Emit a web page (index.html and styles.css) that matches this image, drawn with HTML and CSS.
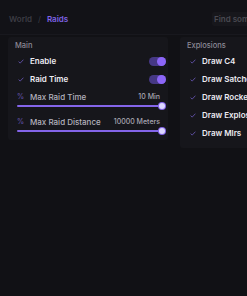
FILE: index.html
```html
<!DOCTYPE html>
<html>
<head>
<meta charset="utf-8">
<link rel="stylesheet" href="styles.css">
</head>
<body>
<header class="topbar">
  <nav class="crumbs">
    <span class="crumb">World</span>
    <span class="sep">/</span>
    <span class="crumb active">Raids</span>
  </nav>
  <div class="search">Find something...</div>
</header>
<main class="content">
  <section class="card card-main">
    <h2 class="card-title">Main</h2>
    <div class="row">
      <span class="ico"><svg width="6" height="5" viewBox="0 0 6 5"><path d="M0.6 2.6 L2.2 4.1 L5.4 0.7" fill="none" stroke="#5b4c9c" stroke-width="1"/></svg></span>
      <span class="label">Enable</span>
      <span class="toggle"><span class="knob"></span></span>
    </div>
    <div class="row">
      <span class="ico"><svg width="6" height="5" viewBox="0 0 6 5"><path d="M0.6 2.6 L2.2 4.1 L5.4 0.7" fill="none" stroke="#5b4c9c" stroke-width="1"/></svg></span>
      <span class="label">Raid Time</span>
      <span class="toggle"><span class="knob"></span></span>
    </div>
    <div class="slider-row">
      <div class="row slim">
        <span class="ico pct">%</span>
        <span class="label light">Max Raid Time</span>
        <span class="value">10 Min</span>
      </div>
      <div class="track"><span class="thumb"></span></div>
    </div>
    <div class="slider-row">
      <div class="row slim">
        <span class="ico pct">%</span>
        <span class="label light">Max Raid Distance</span>
        <span class="value">10000 Meters</span>
      </div>
      <div class="track"><span class="thumb"></span></div>
    </div>
  </section>
  <section class="card card-side">
    <h2 class="card-title">Explosions</h2>
    <div class="row"><span class="ico"><svg width="6" height="5" viewBox="0 0 6 5"><path d="M0.6 2.6 L2.2 4.1 L5.4 0.7" fill="none" stroke="#5b4c9c" stroke-width="1"/></svg></span><span class="label">Draw C4</span></div>
    <div class="row"><span class="ico"><svg width="6" height="5" viewBox="0 0 6 5"><path d="M0.6 2.6 L2.2 4.1 L5.4 0.7" fill="none" stroke="#5b4c9c" stroke-width="1"/></svg></span><span class="label">Draw Satchel</span></div>
    <div class="row"><span class="ico"><svg width="6" height="5" viewBox="0 0 6 5"><path d="M0.6 2.6 L2.2 4.1 L5.4 0.7" fill="none" stroke="#5b4c9c" stroke-width="1"/></svg></span><span class="label">Draw Rocket</span></div>
    <div class="row"><span class="ico"><svg width="6" height="5" viewBox="0 0 6 5"><path d="M0.6 2.6 L2.2 4.1 L5.4 0.7" fill="none" stroke="#5b4c9c" stroke-width="1"/></svg></span><span class="label">Draw Explosives</span></div>
    <div class="row"><span class="ico"><svg width="6" height="5" viewBox="0 0 6 5"><path d="M0.6 2.6 L2.2 4.1 L5.4 0.7" fill="none" stroke="#5b4c9c" stroke-width="1"/></svg></span><span class="label">Draw Mlrs</span></div>
  </section>
</main>
</body>
</html>
```
FILE: styles.css
```css
* { box-sizing: border-box; margin: 0; padding: 0; }
html, body { width: 247px; height: 296px; overflow: hidden; }
body {
  background: #111115;
  font-family: Inter, "Noto Sans", sans-serif;
  color: #e6e4ee;
}
.topbar {
  height: 35px;
  display: flex;
  align-items: center;
  justify-content: space-between;
  padding: 4px 0 0 9px;
  background: #121217;
  border-bottom: 1px solid #18181e;
  white-space: nowrap;
}
.crumbs { display: flex; gap: 6px; font-size: 8px; font-weight: 600; }
.crumb { color: #3c3c44; }
.sep { color: #3c3c44; font-weight: 400; }
.crumb.active { color: #7e63e6; }
.search {
  width: 35px;
  height: 14px;
  background: #17171c;
  border-radius: 2px 0 0 2px;
  font-size: 8px;
  font-weight: 600;
  color: #4a4a52;
  padding-left: 2px;
  line-height: 14px;
  overflow: hidden;
}
.content {
  display: flex;
  gap: 12px;
  padding: 2px 0 0 8px;
  align-items: flex-start;
}
.card {
  background: #16161b;
  border-radius: 3px;
  padding: 4px 2px 8px 7px;
  white-space: nowrap;
}
.card-main { width: 160px; flex: none; }
.card-side { flex: 1; min-width: 0; overflow: hidden; border-radius: 3px 0 0 3px; padding-bottom: 6px; }
.card-title {
  font-size: 7.5px;
  font-weight: 500;
  color: #8c8a96;
  height: 10px;
  line-height: 10px;
  margin-bottom: 1px;
}
.row {
  display: flex;
  align-items: center;
  height: 18px;
  font-size: 8px;
  font-weight: 600;
}
.row.slim { height: 17px; }
.ico { width: 15px; flex: none; display: flex; align-items: center; padding-left: 3px; color: #5b4c9c; }
.pct { font-size: 7px; font-weight: 600; padding-left: 2px; }
.label { flex: 1; color: #ecebf2; }
.label.light { font-weight: 500; color: #b4b2be; font-size: 8px; }
.value { font-size: 7px; font-weight: 500; color: #a8a6b2; padding-right: 6px; }
.toggle {
  width: 17px;
  height: 9px;
  border-radius: 5px;
  background: #463885;
  display: flex;
  justify-content: flex-end;
}
.knob { width: 9px; height: 9px; border-radius: 50%; background: #8c66f7; }
.slider-row + .slider-row { margin-top: 6px; }
.track {
  position: relative;
  height: 2px;
  margin: 0 4px 0 2px;
  background: #8465ea;
  border-radius: 1px;
}
.thumb {
  position: absolute;
  right: -3px;
  top: -2px;
  width: 6px;
  height: 6px;
  border-radius: 50%;
  background: #dcd6ff;
  box-shadow: 0 0 0 1px #8465ea;
}
```
